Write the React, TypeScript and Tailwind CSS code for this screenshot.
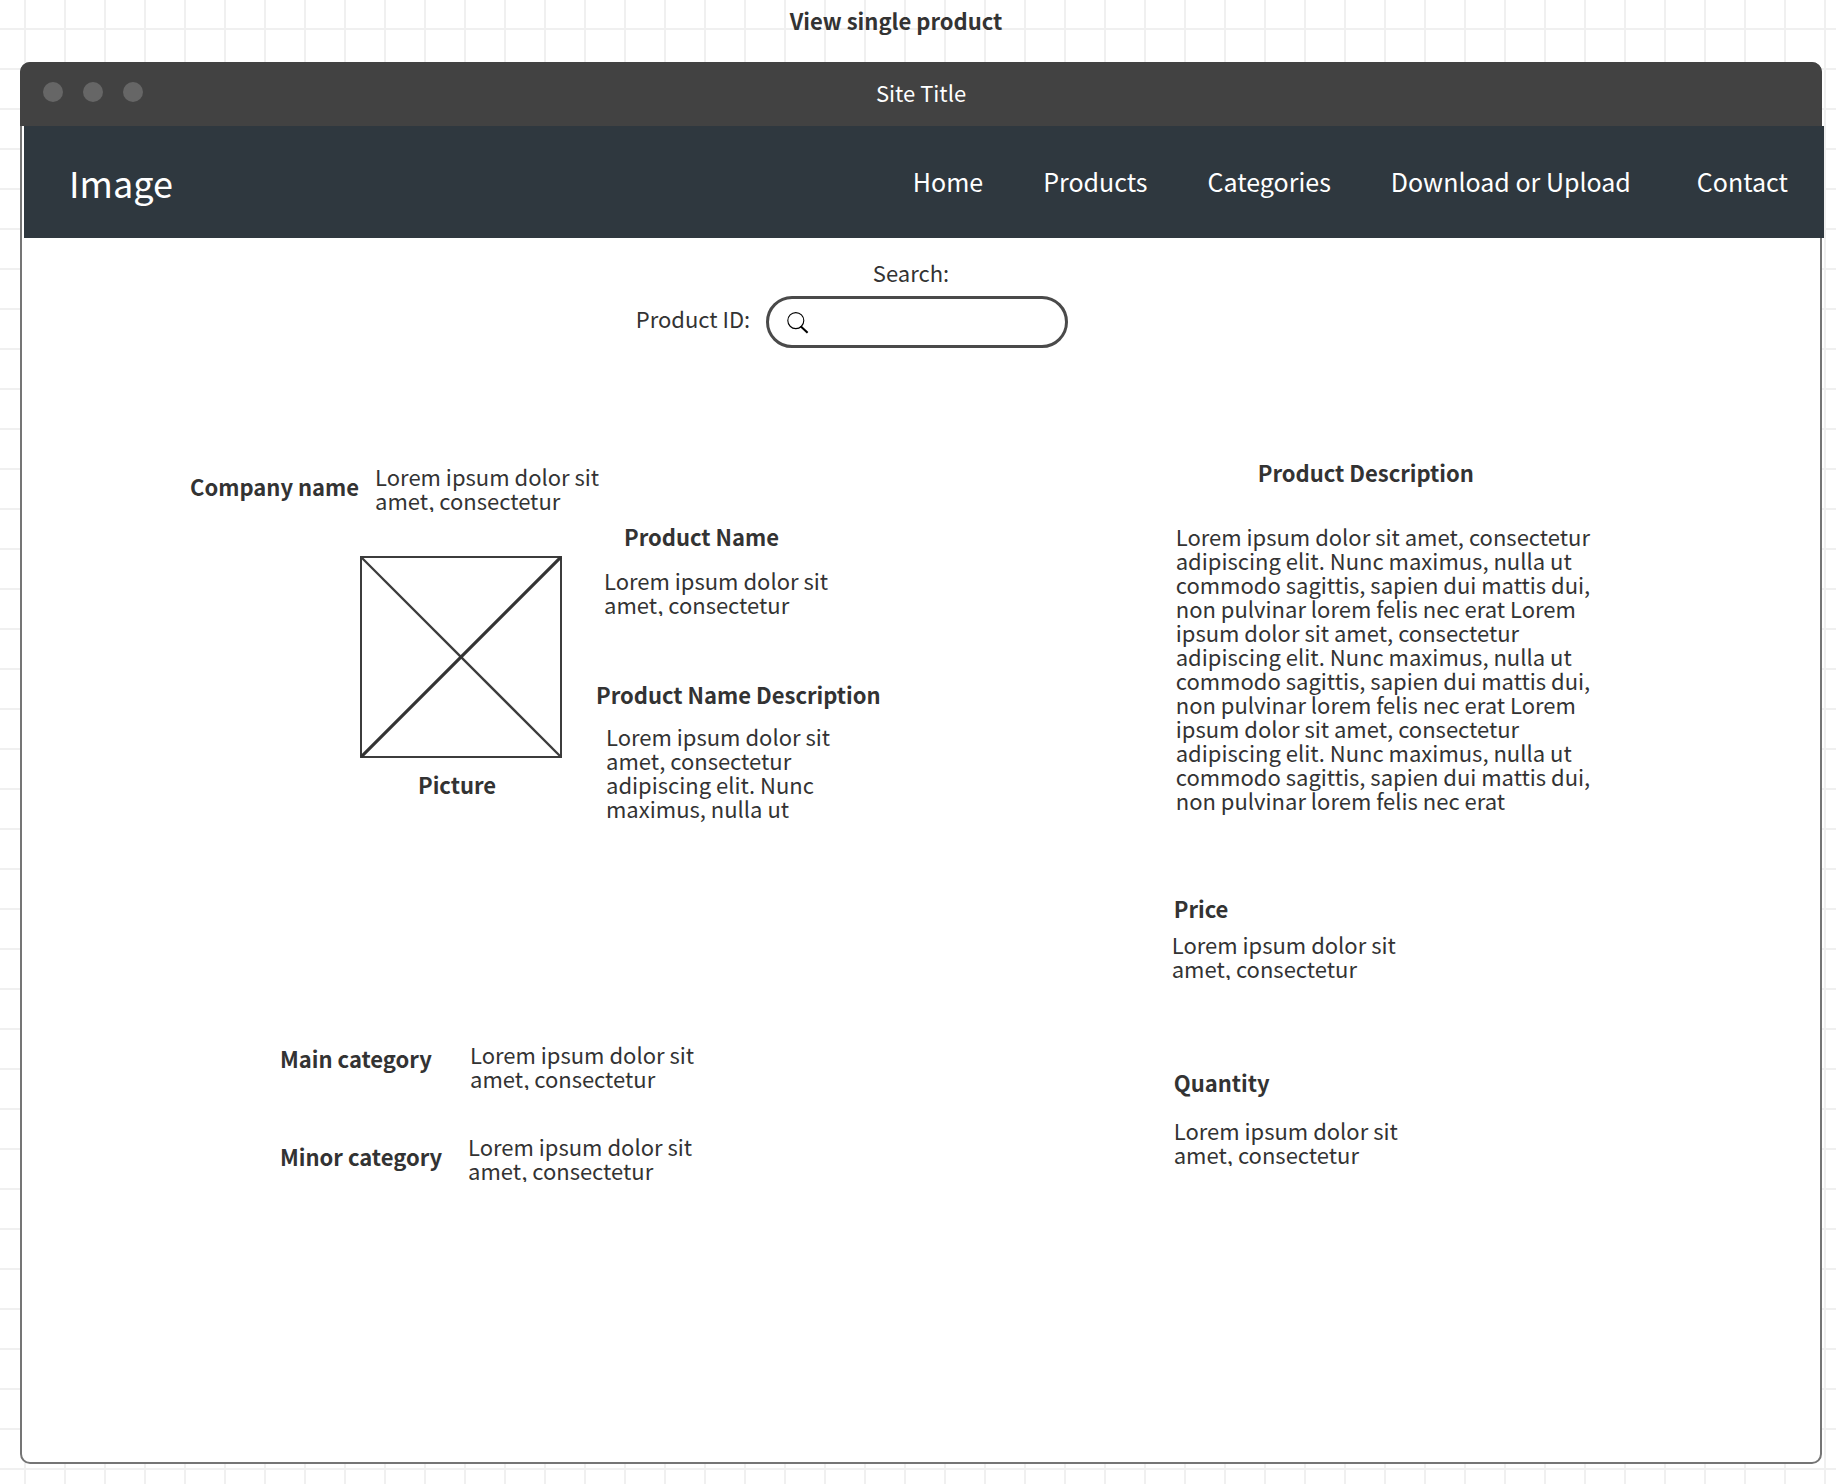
import React from "react";

const NAV_LINKS = ["Home", "Products", "Categories", "Download or Upload"];

const SHORT_TEXT = "Lorem ipsum dolor sit amet, consectetur";

const MEDIUM_TEXT = "Lorem ipsum dolor sit amet, consectetur adipiscing elit. Nunc maximus, nulla ut";

const LONG_TEXT =
  "Lorem ipsum dolor sit amet, consectetur adipiscing elit. Nunc maximus, nulla ut commodo sagittis, sapien dui mattis dui, non pulvinar lorem felis nec erat";

function ShortText({ className = "" }: { className?: string }) {
  return <p className={`h-12 w-[232px] overflow-hidden ${className}`}>{SHORT_TEXT}</p>;
}

function PicturePlaceholder() {
  return (
    <svg viewBox="0 0 202 202" className="block size-[202px]" fill="none" stroke="#3c3c3c" role="img" aria-label="Picture">
      <rect x="1" y="1" width="200" height="200" strokeWidth="2" />
      <path d="M1 1 201 201" strokeWidth="2.3" />
      <path d="M201 1 1 201" stroke="#333" strokeWidth="3.2" />
    </svg>
  );
}

function SearchIcon() {
  return (
    <svg viewBox="0 0 22 22" className="mt-0.5 size-[22px] shrink-0" fill="none" stroke="#000" aria-hidden="true">
      <circle cx="8.8" cy="8.6" r="8" strokeWidth="1.1" />
      <path d="M13.6 14.2 20.6 20.8" strokeWidth="2.1" />
    </svg>
  );
}

export default function App() {
  return (
    <div className="min-h-screen bg-white bg-[linear-gradient(to_right,#f0f0f0_2px,transparent_2px),linear-gradient(to_bottom,#f0f0f0_2px,transparent_2px)] bg-[size:40px_40px] bg-[position:24px_28px] pt-2 pr-[14px] pb-5 pl-5 font-['Noto_Sans_CJK_SC',sans-serif] text-[22px] leading-6 text-[#333]">
      <h1 className="pr-[50px] text-center font-bold">View single product</h1>

      <div className="mt-[30px] min-h-[1402px] rounded-[10px] border-2 border-[#757575] bg-white">
        <header className="-mx-[2px] -mt-[2px] grid h-16 grid-cols-[1fr_auto_1fr] items-center rounded-t-[10px] bg-[#424242] px-[23px] text-white">
          <div className="flex gap-5 pb-1">
            <span className="size-5 rounded-full bg-[#666]" />
            <span className="size-5 rounded-full bg-[#666]" />
            <span className="size-5 rounded-full bg-[#666]" />
          </div>
          <span className="pb-1">Site Title</span>
        </header>

        <nav className="-mr-1 ml-0.5 flex h-28 items-center justify-between bg-[#2f383f] pr-9 pl-[45px] text-white">
          <a href="#" className="text-[36px] leading-10">Image</a>
          <div className="flex items-center gap-[66px] pb-0.5 text-[25px] leading-8">
            <div className="flex gap-[60px]">
              {NAV_LINKS.map((label) => (
                <a key={label} href="#">{label}</a>
              ))}
            </div>
            <a href="#">Contact</a>
          </div>
        </nav>

        <form className="flex flex-col items-center pt-[22px]">
          <span className="pr-5">Search:</span>
          <div className="mt-3 flex items-center gap-4 pr-[138px]">
            <label htmlFor="product-id" className="pb-2">Product ID:</label>
            <div className="flex h-[52px] w-[302px] items-center gap-2 rounded-full border-[3px] border-[#4a4a4a] px-[18px]">
              <SearchIcon />
              <input id="product-id" type="search" className="min-w-0 flex-1 bg-transparent outline-none" />
            </div>
          </div>
        </form>

        <main className="grid grid-cols-[23fr_13fr]">
          <div className="pt-[116px]">
            <section className="flex gap-4 pl-[168px]">
              <h2 className="pt-2.5 font-bold">Company name</h2>
              <ShortText />
            </section>

            <section className="flex pl-[338px]">
              <figure className="mt-11 w-[202px]">
                <PicturePlaceholder />
                <figcaption className="mt-3.5 pr-2 text-center font-bold">Picture</figcaption>
              </figure>
              <div className="mt-3 ml-[34px]">
                <h2 className="ml-7 font-bold">Product Name</h2>
                <ShortText className="mt-5 ml-2" />
                <h2 className="mt-[66px] font-bold">Product Name Description</h2>
                <p className="mt-[18px] ml-2.5 w-[232px]">{MEDIUM_TEXT}</p>
              </div>
            </section>

            <section className="mt-[222px] grid grid-cols-[188px_auto] gap-y-11 pl-[258px]">
              <h2 className="pt-1 font-bold">Main category</h2>
              <ShortText className="ml-0.5" />
              <h2 className="pt-2.5 font-bold">Minor category</h2>
              <ShortText />
            </section>
          </div>

          <div className="pt-28 pl-px">
            <h2 className="ml-[86px] font-bold">Product Description</h2>
            <p className="mt-10 ml-1 w-[428px]">{[LONG_TEXT, LONG_TEXT, LONG_TEXT].join(" ")}</p>
            <h2 className="mt-[84px] ml-0.5 font-bold">Price</h2>
            <ShortText className="mt-3" />
            <h2 className="mt-[90px] ml-0.5 font-bold">Quantity</h2>
            <ShortText className="mt-6 ml-0.5" />
          </div>
        </main>
      </div>
    </div>
  );
}
